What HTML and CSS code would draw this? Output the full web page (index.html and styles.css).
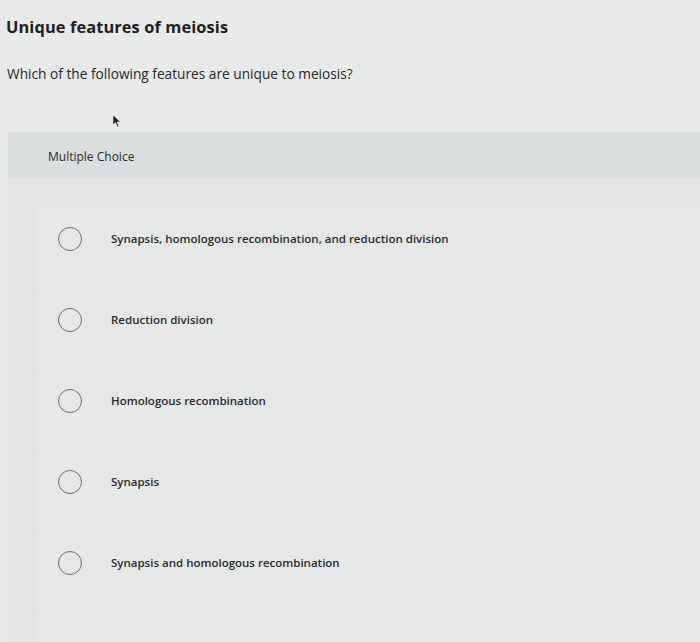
FILE: index.html
```html
<!DOCTYPE html>
<html>
<head>
<meta charset="utf-8">
<link rel="stylesheet" href="styles.css">
</head>
<body>
<div class="page">
  <h1 class="title">Unique features of meiosis</h1>
  <p class="question">Which of the following features are unique to meiosis?</p>
  <svg class="cursor" width="10" height="14" viewBox="0 0 10 14"><path d="M1 1 L1 11 L3.5 8.5 L5.5 13 L7 12.3 L5 8 L8.5 8 Z" fill="#222" stroke="#eee" stroke-width="0.6"/></svg>
  <section class="panel">
    <div class="panel-head">Multiple Choice</div>
    <div class="options">
      <div class="option"><span class="radio"></span><span class="label">Synapsis, homologous recombination, and reduction division</span></div>
      <div class="option"><span class="radio"></span><span class="label">Reduction division</span></div>
      <div class="option"><span class="radio"></span><span class="label">Homologous recombination</span></div>
      <div class="option"><span class="radio"></span><span class="label">Synapsis</span></div>
      <div class="option"><span class="radio"></span><span class="label">Synapsis and homologous recombination</span></div>
    </div>
  </section>
</div>
</body>
</html>
```

FILE: styles.css
```css
html, body {
  margin: 0;
  padding: 0;
  height: 100%;
}
body {
  background: #e8e9e9;
  font-family: "Open Sans", "Liberation Sans", sans-serif;
  color: #222;
  overflow: hidden;
}
.page {
  position: relative;
  height: 642px;
  display: flex;
  flex-direction: column;
}
.title {
  margin: 15px 0 0 6px;
  font-size: 16.4px;
  font-weight: 700;
  line-height: 24px;
  color: #1e1e1e;
  letter-spacing: 0.1px;
}
.question {
  margin: 26px 0 0 7px;
  font-size: 13.7px;
  line-height: 18px;
  color: #2a2a2a;
}
.cursor {
  position: absolute;
  left: 112px;
  top: 114px;
}
.panel {
  margin: 49px 0 0 8px;
  flex: 1;
  background: #e2e4e4;
  display: flex;
  flex-direction: column;
}
.panel-head {
  height: 46px;
  background: #dbdede;
  padding-left: 40px;
  display: flex;
  align-items: center;
  font-size: 12px;
  color: #2a2a2a;
  box-sizing: border-box;
  padding-top: 2px;
}
.options {
  margin: 30px 0 0 28px;
  flex: 1;
  background: #e6e8e8;
  display: flex;
  flex-direction: column;
}
.option {
  height: 81px;
  flex: none;
  box-sizing: border-box;
  padding: 19px 0 0 22px;
  display: flex;
  align-items: flex-start;
  border-bottom: 1px solid #e2e4e4;
}
.radio {
  width: 24px;
  height: 24px;
  box-sizing: border-box;
  border: 1.5px solid #6e6e6e;
  border-radius: 50%;
  flex: none;
}
.label {
  margin-left: 29px;
  line-height: 24px;
  font-size: 11.5px;
  font-weight: 600;
  color: #2b2b2b;
}
```
